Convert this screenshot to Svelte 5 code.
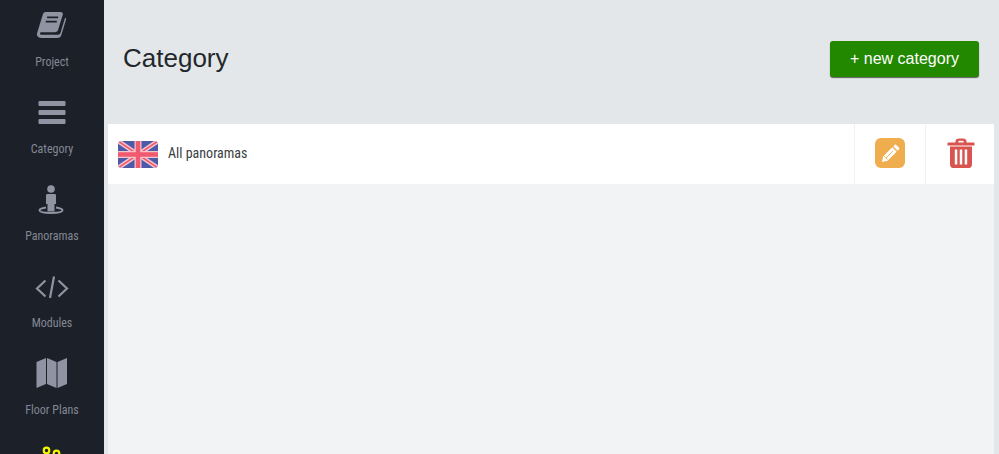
<script>
	const nav = [
		{ label: 'Project', icon: 'book' },
		{ label: 'Category', icon: 'bars' },
		{ label: 'Panoramas', icon: 'person' },
		{ label: 'Modules', icon: 'code' },
		{ label: 'Floor Plans', icon: 'map' },
		{ label: '', icon: 'users' }
	];
</script>

<div class="layout">
	<aside class="sidebar">
		{#each nav as item}
			<a class="nav-item" href="#top">
				<svg class="nav-icon" viewBox="0 0 36 36" aria-hidden="true">
					{#if item.icon === 'book'}
						<g transform="translate(.7 .3) scale(.92 .84)">
							<path d="M12 2h16c2 0 3 1.300 2.500 3.200l-5 18c-.5 1.800-1.700 2.800-3.500 2.800H7.500c-1.200 0-2 .8-1.800 1.800.2.800 1 1.200 2 1.200h17.500c1.400 0 2.300-.6 2.800-2L33 9c.8.500 1.200 1.300 1 2.300l-5 18c-.5 2-2.200 3.700-4.500 3.700H7c-3 0-5-2.500-4.500-5.300.1-.7.300-1.300.5-2L9 4.500C9.500 3 10.500 2 12 2z" />
							<path class="cut" d="M13.500 8.500h12M12 13.500h12" />
						</g>
					{:else if item.icon === 'bars'}
						<rect x="4.500" y="4" width="27" height="5" rx="1" />
						<rect x="4.500" y="13" width="27" height="5" rx="1" />
						<rect x="4.500" y="22" width="27" height="5" rx="1" />
					{:else if item.icon === 'person'}
						<g transform="translate(-1 -1.500)">
							<circle cx="18" cy="6.500" r="3.800" />
							<path d="M14.500 11.500h7c1 0 1.500.6 1.500 1.500v8.500h-1.500V29h-7v-7.500H13V13c0-.9.500-1.500 1.500-1.500z" />
							<path class="ring" d="M13 25c-4 .6-6.500 1.500-6.500 2.800 0 1.900 5 2.700 11.500 2.700s11.500-.8 11.500-2.700c0-1.300-2.500-2.200-6.500-2.800" />
						</g>
					{:else if item.icon === 'code'}
						<path class="line" d="M11.500 9.500L3 17.500l8.500 8M24.500 9.500l8.500 8-8.500 8M20 5.500l-4 21.500" />
					{:else if item.icon === 'map'}
						<path d="M2.500 4l9.500-4v26l-9.500 4zM13 0l9.500 4v26L13 26zM23.500 4L33 0v26l-9.500 4z" />
					{:else}
						<circle class="hollow" cx="12.500" cy="5.500" r="2.800" />
						<circle class="hollow" cx="22.500" cy="8.500" r="2.800" />
					{/if}
				</svg>
				{#if item.label}
					<span class="nav-label">{item.label}</span>
				{/if}
			</a>
		{/each}
	</aside>

	<main class="content">
		<header class="page-head">
			<h1>Category</h1>
			<button type="button" class="new-btn">+ new category</button>
		</header>

		<div class="panel">
			<div class="row">
				<div class="row-main">
					<svg class="flag" viewBox="0 0 40 27" aria-hidden="true">
						<defs>
							<clipPath id="flag-clip"><rect width="40" height="27" rx="4" /></clipPath>
						</defs>
						<g clip-path="url(#flag-clip)">
							<rect width="40" height="27" fill="#4c5aa8" />
							<path d="M0 0l40 27M40 0L0 27" stroke="#f3c6cf" stroke-width="4.500" />
							<path d="M0 0l40 27M40 0L0 27" stroke="#f0596e" stroke-width="1.600" />
							<path d="M20 0v27M0 13.500h40" stroke="#f3c6cf" stroke-width="7" />
							<path d="M20 0v27M0 13.500h40" stroke="#f0596e" stroke-width="4.500" />
						</g>
					</svg>
					<span class="row-name">All panoramas</span>
				</div>
				<div class="row-action">
					<button type="button" class="edit-btn" aria-label="Edit">
						<svg viewBox="0 0 20 20" aria-hidden="true">
							<path d="M14 1.800c.4-.4 1-.4 1.400 0l2.800 2.800c.4.400.4 1 0 1.400l-1.400 1.400-4.200-4.200zM11.700 4.100l4.200 4.200-8.700 8.700-5.400 1.200 1.200-5.400z" />
							<path class="pencil-cut" d="M12.500 7.500l-6.800 6.800M4.200 12.700l3.100 3.100" />
						</svg>
					</button>
				</div>
				<div class="row-action">
					<button type="button" class="trash-btn" aria-label="Delete">
						<svg viewBox="0 0 28 30" aria-hidden="true">
							<path fill-rule="evenodd" d="M8.500 4.500V3.500C8.500 1.600 9.900.4 12 .4h4c2.100 0 3.500 1.200 3.500 3.100v1h7c.6 0 1 .4 1 1V7.500H.5V5.500c0-.6.400-1 1-1zM11.300 4.500h5.400V3.700c0-.5-.3-.9-.8-.9h-3.800c-.5 0-.8.4-.8.900z" />
							<path fill-rule="evenodd" d="M3 8.500h22v18c0 1.900-1.300 3.500-3 3.500H6c-1.700 0-3-1.600-3-3.500zM7.800 11.500v15h2.500v-15zM12.750 11.500v15h2.500v-15zM17.700 11.500v15h2.500v-15z" />
						</svg>
					</button>
				</div>
			</div>
		</div>
	</main>
</div>

<style>
	:global(body) {
		margin: 0;
		background: #e4e7ea;
		overflow: hidden;
	}

	.layout {
		display: flex;
		height: 454px;
		overflow: hidden;
		font-family: Roboto, 'Liberation Sans', sans-serif;
	}

	.sidebar {
		flex: 0 0 104px;
		display: flex;
		flex-direction: column;
		align-items: center;
		background: #1c2029;
		padding-top: 7px;
		box-sizing: border-box;
		overflow: hidden;
	}

	.nav-item {
		flex: 0 0 87px;
		display: flex;
		flex-direction: column;
		align-items: center;
		color: #838894;
		text-decoration: none;
	}

	.nav-icon {
		flex: none;
		width: 36px;
		height: 36px;
		margin-top: 3px;
		fill: #8f94a3;
	}

	.nav-item:last-child .nav-icon {
		fill: none;
	}

	.nav-label {
		margin-top: 9px;
		font-size: 12px;
		font-stretch: 75%;
		white-space: nowrap;
	}

	.nav-icon .cut {
		fill: none;
		stroke: #1c2029;
		stroke-width: 2;
	}

	.nav-icon .ring {
		fill: none;
		stroke: #8f94a3;
		stroke-width: 2;
	}

	.nav-icon .line {
		fill: none;
		stroke: #8f94a3;
		stroke-width: 2.200;
	}

	.nav-icon .hollow {
		fill: none;
		stroke: #f5f500;
		stroke-width: 2.200;
	}

	.content {
		flex: 1;
		min-width: 0;
		display: flex;
		flex-direction: column;
	}

	.page-head {
		flex: 0 0 124px;
		display: flex;
		align-items: center;
		justify-content: space-between;
		padding: 0 20px 6px 19px;
		box-sizing: border-box;
	}

	h1 {
		margin: 0 0 2px;
		font-size: 26px;
		font-weight: 400;
		color: #23272b;
		font-family: 'Liberation Sans', Arial, sans-serif;
	}

	.new-btn {
		width: 149px;
		height: 36px;
		border: 0;
		border-radius: 3px;
		background: #228800;
		box-shadow: 0 1px 1px rgba(0, 0, 0, 0.6);
		color: #fff;
		font-family: 'Liberation Sans', Arial, sans-serif;
		font-size: 16px;
	}

	.panel {
		flex: 1;
		margin: 0 5px 0 4px;
		background: #f2f3f5;
	}

	.row {
		display: flex;
		height: 60px;
		background: #fff;
	}

	.row-main {
		flex: 1;
		display: flex;
		align-items: center;
		gap: 10px;
		padding-left: 10px;
	}

	.flag {
		width: 40px;
		height: 27px;
	}

	.row-name {
		margin-bottom: 2px;
		font-size: 14px;
		font-stretch: 75%;
		color: #3a3e42;
	}

	.row-action {
		display: flex;
		align-items: center;
		justify-content: center;
		width: 70px;
		padding-bottom: 2px;
		border-left: 1px solid #f0f1f3;
		box-sizing: border-box;
	}

	.row-action:nth-child(2) {
		width: 71px;
	}

	.row-action:last-child {
		width: 69px;
		padding-left: 2px;
	}

	.edit-btn,
	.trash-btn {
		display: flex;
		align-items: center;
		justify-content: center;
		border: 0;
		padding: 0;
		background: none;
	}

	.edit-btn {
		width: 30px;
		height: 30px;
		border-radius: 6px;
		background: #f0ad4e;
	}

	.edit-btn svg {
		width: 21px;
		height: 21px;
		fill: #fff;
	}

	.pencil-cut {
		fill: none;
		stroke: #f0ad4e;
		stroke-width: 0.900;
	}

	.trash-btn svg {
		width: 28px;
		height: 30px;
		fill: #d9534f;
	}
</style>
